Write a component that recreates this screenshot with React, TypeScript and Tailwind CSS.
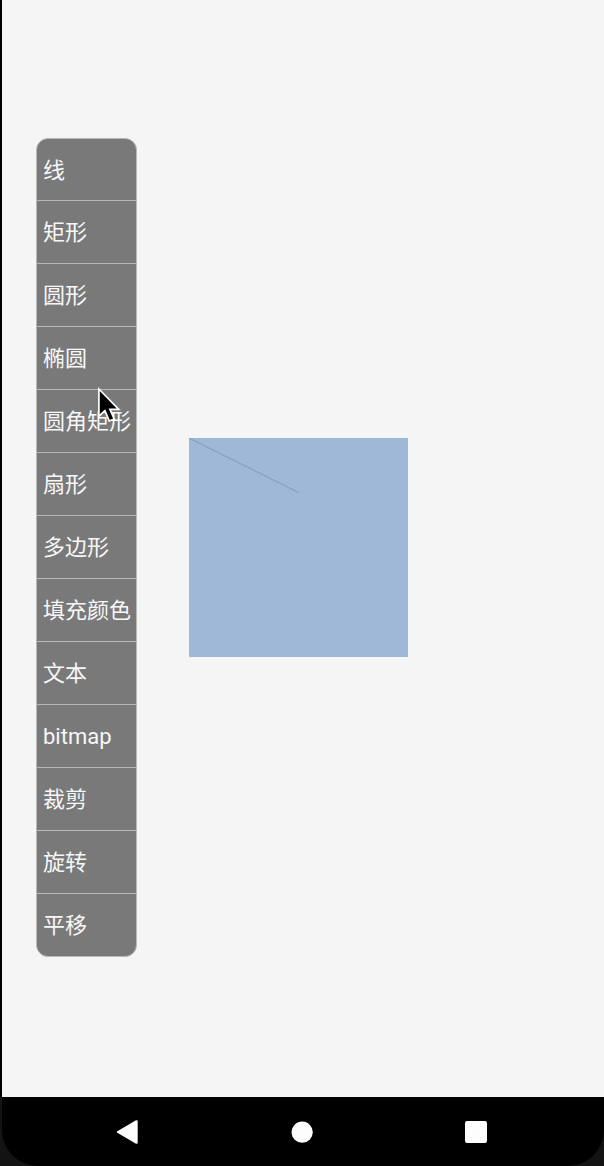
import { useState } from "react";

const shapes = [
  "线",
  "矩形",
  "圆形",
  "椭圆",
  "圆角矩形",
  "扇形",
  "多边形",
  "填充颜色",
  "文本",
  "bitmap",
  "裁剪",
  "旋转",
  "平移",
];

function ShapeMenu({ onSelect }: { onSelect: (name: string) => void }) {
  return (
    <ul className="shrink-0 overflow-hidden rounded-xl border border-[#b8b8b8] bg-[#797979]">
      {shapes.map((name) => (
        <li
          key={name}
          className="h-[63px] border-b border-[#b8b8b8] first:h-[62px] last:h-[62px] last:border-b-0"
        >
          <button
            type="button"
            onClick={() => onSelect(name)}
            className="flex h-full w-full items-center pt-0.5 pr-[5px] pl-1.5 text-left text-[22px] leading-7 whitespace-nowrap text-[#f7f7f7]"
          >
            {name}
          </button>
        </li>
      ))}
    </ul>
  );
}

function Canvas() {
  return (
    <div className="size-[219px] shrink-0 bg-[#9fb8d7]">
      <svg viewBox="0 0 219 219" className="block size-full" aria-hidden="true">
        <path d="M0 0L109.5 54.5" stroke="#7f96b8" strokeWidth="0.9" fill="none" />
      </svg>
    </div>
  );
}

function Pointer() {
  return (
    <svg
      viewBox="0 0 26 40"
      className="pointer-events-none absolute top-[385px] left-[96px] h-10 w-[26px]"
      aria-hidden="true"
    >
      <path
        d="M2.9 4V31.2L8.9 25.6L13.3 36L18.2 34L13.9 24.3H22.8Z"
        fill="#000"
        stroke="#fff"
        strokeWidth="1.7"
        strokeLinejoin="miter"
      />
    </svg>
  );
}

function NavigationBar() {
  return (
    <div className="bg-[#131313]">
      <nav className="ml-0.5 grid h-[69px] grid-cols-3 items-center justify-items-center rounded-b-[36px] bg-black pr-[41px] pl-[38px]">
        <button type="button" aria-label="Back">
          <svg viewBox="0 0 24 24" className="block size-6" fill="#fdfdfd">
            <path d="M2.3 11.2L21 0.3Q22.7 -0.2 22.7 1.5V22.5Q22.7 24.2 21 23.7L2.3 12.8Q1.3 12 2.3 11.2Z" />
          </svg>
        </button>
        <button type="button" aria-label="Home">
          <svg viewBox="0 0 24 24" className="block size-6" fill="#fdfdfd">
            <circle cx="13.2" cy="12.2" r="10.6" />
          </svg>
        </button>
        <button type="button" aria-label="Recent apps">
          <svg viewBox="0 0 24 24" className="block size-6" fill="#fdfdfd">
            <rect x="1" y="1" width="22" height="22" rx="2" />
          </svg>
        </button>
      </nav>
    </div>
  );
}

export default function App() {
  const [, setShape] = useState("线");
  return (
    <div className="relative flex min-h-screen flex-col bg-[#f5f5f5] font-[Roboto,'Noto_Sans_CJK_SC',sans-serif]">
      <main className="flex grow items-center gap-[52px] border-l-2 border-black pb-0.5 pl-[34px]">
        <ShapeMenu onSelect={setShape} />
        <Canvas />
      </main>
      <NavigationBar />
      <Pointer />
    </div>
  );
}
